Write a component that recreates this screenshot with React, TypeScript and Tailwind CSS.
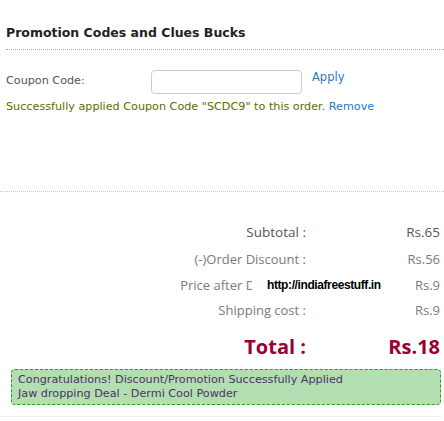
export default function App() {
  const rows = [
    { l: "Subtotal :", v: "Rs.65", c: "h-[29px] text-[#555] text-[13.5px]" },
    { l: "(-)Order Discount :", v: "Rs.56", c: "h-[26px] text-[#7a7a7a] text-[13px]" },
    { l: "Price after Discount :", v: "Rs.9", c: "h-[25px] text-[#7a7a7a] text-[13px]" },
    { l: "Shipping cost :", v: "Rs.9", c: "h-[25px] text-[#7a7a7a] text-[13px]" },
  ];
  return (
    <div className="w-[444px] h-[421px] bg-white font-['DejaVu_Sans',sans-serif] relative overflow-hidden">
      <div className="pt-[24px] pl-[6px]">
        <h2 className="text-[12.5px] font-bold text-[#222] pb-[6px] border-b border-dotted border-[#aaa]">
          Promotion Codes and Clues Bucks
        </h2>
        <div className="flex items-center mt-[20px] h-[24px]">
          <span className="w-[145px] text-[11.2px] text-[#555]">Coupon Code:</span>
          <input className="w-[151px] h-[24px] border border-[#ccc] rounded-[4px] outline-none" />
          <a className="ml-[10px] -mt-[8px] text-[11.5px] text-[#2a7ac7]">Apply</a>
        </div>
        <p className="mt-[6px] text-[11.2px] leading-[14px] text-[#5b6e00]">
          Successfully applied Coupon Code "SCDC9" to this order. <span className="text-[#2a7ac7]">Remove</span>
        </p>
      </div>
      <div className="mt-[77px] border-t border-dotted border-[#ccc]" />
      <div className="mt-[26px] pr-[4px] font-['Open_Sans',sans-serif]">
        {rows.map((r) => (
          <div key={r.l} className={`grid grid-cols-[1fr_130px] items-center ${r.c}`}>
            <span className="text-right pr-[4px]">{r.l}</span>
            <span className="text-right">{r.v}</span>
          </div>
        ))}
        <div className="grid grid-cols-[1fr_130px] items-center mt-[9px] h-[28px] text-[20px] font-bold text-[#990033]">
          <span className="text-right pr-[4px]">Total :</span>
          <span className="text-right">Rs.18</span>
        </div>
      </div>
      <div className="ml-[11px] mr-[3px] mt-[9px] rounded-[4px] border border-dashed border-[#2a9a2a] bg-[#b2deb2] px-[6px] py-[3px] text-[11.2px] leading-[14px] text-[#4a3560]">
        <div>Congratulations! Discount/Promotion Successfully Applied</div>
        <div>Jaw dropping Deal - Dermi Cool Powder</div>
      </div>
      <div className="mt-[11px] border-t border-[#eee] mr-[3px]" />
      <div className="absolute left-[252px] top-[272px] w-[150px] h-[25px] bg-white flex items-center pl-[15px] font-['Liberation_Sans',sans-serif] text-[12px] font-bold text-black tracking-[-0.4px]">
        http://indiafreestuff.in
      </div>
    </div>
  );
}
